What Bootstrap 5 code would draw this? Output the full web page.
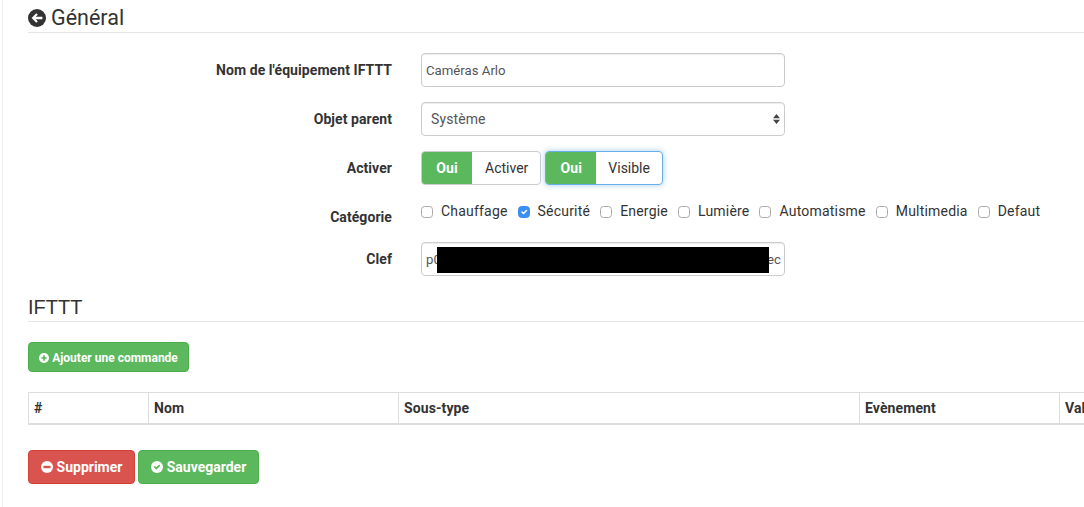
<!DOCTYPE html>
<html lang="fr">
<head>
<meta charset="utf-8">
<title>Général</title>
<link href="https://cdn.jsdelivr.net/npm/bootstrap@5.3.0/dist/css/bootstrap.min.css" rel="stylesheet">
<style>
html,body{height:507px;overflow:hidden;background:#fff}
body{font-family:Roboto,"Liberation Sans",sans-serif;font-size:14px;color:#333;line-height:20px}
.shell{margin-left:2px;border-left:1px solid #eee;height:507px;padding:0 0 0 25px;width:1082px;overflow:hidden}
.sect-head{font-size:21.5px;line-height:27px;height:28px;padding-bottom:2px;margin:5px 0 0;border-bottom:1px solid #e5e5e5;font-weight:400;display:flex;align-items:center;gap:5px;color:#333;width:1300px}
.sect-head svg{width:18px;height:18px;margin-top:1px;flex:none}
.form-area{width:1056px;padding-top:20px}
.frow{display:flex;gap:29px;margin-bottom:15px;min-height:34px;align-items:center}
.flabel{width:364px;text-align:right;font-weight:700;color:#333;margin:0;flex:none;letter-spacing:.07px}
.fctl{width:364px;flex:none}
.fctl .form-control,.fctl .form-select{height:34px;line-height:20px;border:1px solid #ccc;border-radius:4px;color:#555;box-shadow:inset 0 1px 1px rgba(0,0,0,.075)}
.fctl .form-control{padding:6px 3px 6px 4px;font-size:13.2px}
.fctl .form-select{padding:6px 9px;font-size:14px;letter-spacing:.1px;background-position:right 3px center;background-size:9px 12px;background-image:url("data:image/svg+xml,%3Csvg xmlns='http://www.w3.org/2000/svg' viewBox='0 0 9 12'%3E%3Cpath fill='%23444' d='M4.5 1 8 5.300H1zM4.5 11 1 6.700h7z'/%3E%3C/svg%3E")}
.toggles{display:flex;gap:4px}
.tog{display:flex;height:34px;border:1px solid #ccc;border-radius:4px;overflow:hidden;background:#fff}
.tog-on{background:#5cb85c;color:#fff;font-weight:700;width:50px;text-align:center;line-height:32px;letter-spacing:.15px}
.tog-off{color:#333;line-height:32px;text-align:center;padding:0 12px 0 13px}
.tog-focus{border-color:#66afe9;box-shadow:0 0 6px rgba(102,175,233,.6);overflow:visible}
.tog-focus .tog-on{border-radius:3px 0 0 3px}
.tog-focus .tog-off{padding:0 12px}
.cat-row{min-height:27px;align-items:flex-start}
.cat-row .flabel{padding-top:7px}
.cats{display:flex;gap:10px;width:700px;line-height:22px;height:22px}
.cat-item{display:flex;align-items:center;margin:0;color:#333;letter-spacing:.2px}
.cat-item input{width:12px;height:12px;margin:1px 8px 0 0;border:1px solid #aaa;border-radius:3px;box-shadow:none;flex:none;background-size:10px}
.cat-item input:checked{background-color:#3b8ff3;border-color:#3b8ff3}
.key-wrap{position:relative}
.redact{position:absolute;left:16px;top:5px;width:332px;height:26px;background:#000}
.sect-sub{margin:17px 0 0;height:29px;font-size:20px;line-height:28px;border-bottom:1px solid #e5e5e5;font-weight:400;color:#333;font-family:"Liberation Sans",Arial,sans-serif;width:1300px}
.btn-add,.btn-del,.btn-save{display:inline-flex;align-items:center;justify-content:center;color:#fff;font-weight:700;border-radius:4px;padding:0}
.btn-add svg,.btn-del svg,.btn-save svg{flex:none}
.btn-add{width:161px;height:30px;padding-top:1px;font-size:12px;line-height:18px;background:#5cb85c;border:1px solid #4cae4c;margin-top:20px;gap:3px}
.btn-add svg{width:10px;height:10px}
.tbl{width:1300px;table-layout:fixed;margin:20px 0 25px;border-collapse:collapse}
.tbl th{height:31px;padding:0 5px;font-weight:700;color:#333;border:1px solid #ddd;border-bottom:2px solid #ddd;vertical-align:middle;letter-spacing:.1px}
.btn-del,.btn-save{height:34px;font-size:14px;line-height:20px;gap:4px}
.btn-del svg,.btn-save svg{width:12px;height:12px}
.btn-del{width:107px;background:#d9534f;border:1px solid #d43f3a}
.btn-save{width:121px;background:#5cb85c;border:1px solid #4cae4c;margin-left:3px}
.btn-del:hover,.btn-del:active,.btn-save:hover,.btn-add:hover{color:#fff}
</style>
</head>
<body>
<div class="shell">
  <h1 class="sect-head">
    <svg viewBox="0 0 20 20" aria-hidden="true"><circle cx="10" cy="10" r="10" fill="#333"/><path d="M9.2 4.6 4 10l5.2 5.400 1.700-1.700-2.400-2.400H16V8.700H8.500l2.400-2.400z" fill="#fff"/></svg>
    Général
  </h1>
  <form class="form-area">
    <div class="frow">
      <label class="flabel">Nom de l'équipement IFTTT</label>
      <div class="fctl"><input class="form-control" type="text" value="Caméras Arlo"></div>
    </div>
    <div class="frow">
      <label class="flabel">Objet parent</label>
      <div class="fctl"><select class="form-select"><option>Système</option></select></div>
    </div>
    <div class="frow">
      <label class="flabel">Activer</label>
      <div class="toggles">
        <div class="tog"><span class="tog-on">Oui</span><span class="tog-off">Activer</span></div>
        <div class="tog tog-focus"><span class="tog-on">Oui</span><span class="tog-off">Visible</span></div>
      </div>
    </div>
    <div class="frow cat-row">
      <label class="flabel">Catégorie</label>
      <div class="cats">
        <label class="cat-item"><input class="form-check-input" type="checkbox">Chauffage</label>
        <label class="cat-item"><input class="form-check-input" type="checkbox" checked>Sécurité</label>
        <label class="cat-item"><input class="form-check-input" type="checkbox">Energie</label>
        <label class="cat-item"><input class="form-check-input" type="checkbox">Lumière</label>
        <label class="cat-item"><input class="form-check-input" type="checkbox">Automatisme</label>
        <label class="cat-item"><input class="form-check-input" type="checkbox">Multimedia</label>
        <label class="cat-item"><input class="form-check-input" type="checkbox">Defaut</label>
      </div>
    </div>
    <div class="frow mb-0">
      <label class="flabel">Clef</label>
      <div class="fctl key-wrap"><input class="form-control" type="text" value="p012345678901234567890123456789012345678901234ec"><div class="redact"></div></div>
    </div>
  </form>
  <h2 class="sect-sub">IFTTT</h2>
  <a class="btn btn-add" href="#"><svg viewBox="0 0 20 20" aria-hidden="true"><circle cx="10" cy="10" r="10" fill="#fff"/><path d="M8.300 4.500h3.400v3.800h3.800v3.400h-3.800v3.800H8.300v-3.800H4.500V8.300h3.800z" fill="#5cb85c"/></svg>Ajouter une commande</a>
  <table class="tbl">
    <colgroup><col style="width:120px"><col style="width:250px"><col style="width:461px"><col style="width:200px"><col></colgroup>
    <thead><tr><th>#</th><th>Nom</th><th>Sous-type</th><th>Evènement</th><th>Valeur</th></tr></thead>
  </table>
  <a class="btn btn-del" href="#"><svg viewBox="0 0 20 20" aria-hidden="true"><circle cx="10" cy="10" r="10" fill="#fff"/><rect x="4" y="8" width="12" height="4" fill="#d9534f"/></svg>Supprimer</a><a class="btn btn-save" href="#"><svg viewBox="0 0 20 20" aria-hidden="true"><circle cx="10" cy="10" r="10" fill="#fff"/><path d="m4.500 10.200 2-2 2.300 2.300 4.700-4.700 2 2-6.700 6.700z" fill="#5cb85c"/></svg>Sauvegarder</a>
</div>
</body>
</html>
